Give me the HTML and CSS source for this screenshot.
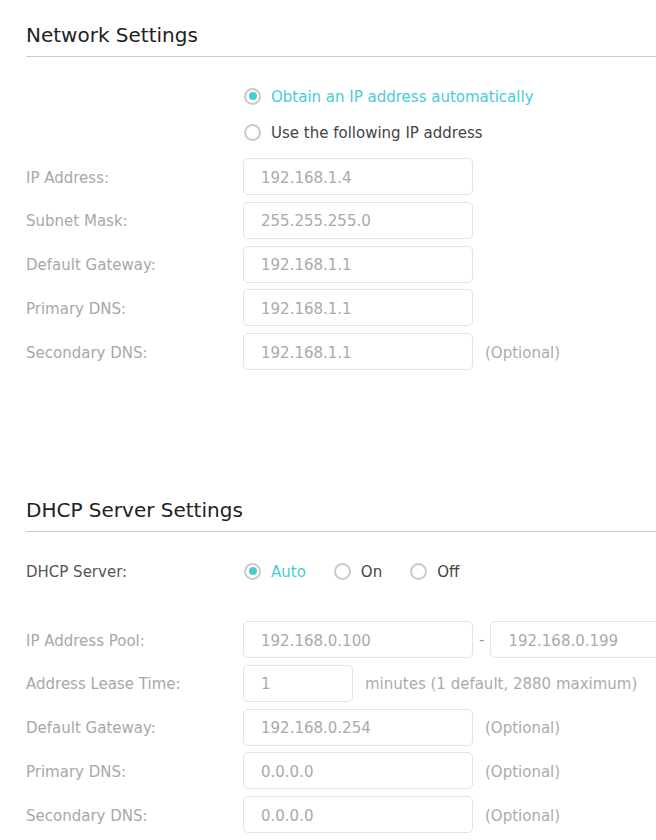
FILE: index.html
```html
<!DOCTYPE html>
<html>
<head>
<meta charset="utf-8">
<link rel="stylesheet" href="styles.css">
</head>
<body>
<div class="page">
  <section class="panel">
    <h2 class="title">Network Settings</h2>
    <div class="form">
      <div class="row radio-row first">
        <div class="label"></div>
        <div class="field"><span class="radio on"></span><span class="opt active">Obtain an IP address automatically</span></div>
      </div>
      <div class="row radio-row">
        <div class="label"></div>
        <div class="field"><span class="radio"></span><span class="opt">Use the following IP address</span></div>
      </div>
      <div class="row input-row top-gap">
        <div class="label">IP Address:</div>
        <div class="field"><div class="input">192.168.1.4</div></div>
      </div>
      <div class="row input-row">
        <div class="label">Subnet Mask:</div>
        <div class="field"><div class="input">255.255.255.0</div></div>
      </div>
      <div class="row input-row">
        <div class="label">Default Gateway:</div>
        <div class="field"><div class="input">192.168.1.1</div></div>
      </div>
      <div class="row input-row">
        <div class="label">Primary DNS:</div>
        <div class="field"><div class="input">192.168.1.1</div></div>
      </div>
      <div class="row input-row">
        <div class="label">Secondary DNS:</div>
        <div class="field"><div class="input">192.168.1.1</div><span class="hint">(Optional)</span></div>
      </div>
    </div>
  </section>

  <section class="panel second">
    <h2 class="title">DHCP Server Settings</h2>
    <div class="form">
      <div class="row radio-row first">
        <div class="label dark">DHCP Server:</div>
        <div class="field">
          <span class="choice"><span class="radio on"></span><span class="opt active">Auto</span></span>
          <span class="choice"><span class="radio"></span><span class="opt">On</span></span>
          <span class="choice"><span class="radio"></span><span class="opt">Off</span></span>
        </div>
      </div>
      <div class="row input-row pool-gap">
        <div class="label">IP Address Pool:</div>
        <div class="field"><div class="input">192.168.0.100</div><span class="dash">-</span><div class="input">192.168.0.199</div></div>
      </div>
      <div class="row input-row">
        <div class="label">Address Lease Time:</div>
        <div class="field"><div class="input short">1</div><span class="hint">minutes (1 default, 2880 maximum)</span></div>
      </div>
      <div class="row input-row">
        <div class="label">Default Gateway:</div>
        <div class="field"><div class="input">192.168.0.254</div><span class="hint">(Optional)</span></div>
      </div>
      <div class="row input-row">
        <div class="label">Primary DNS:</div>
        <div class="field"><div class="input">0.0.0.0</div><span class="hint">(Optional)</span></div>
      </div>
      <div class="row input-row">
        <div class="label">Secondary DNS:</div>
        <div class="field"><div class="input">0.0.0.0</div><span class="hint">(Optional)</span></div>
      </div>
    </div>
  </section>
</div>
</body>
</html>
```
FILE: styles.css
```css
html, body {
  margin: 0;
  padding: 0;
  background: #ffffff;
  overflow: hidden;
}
body {
  font-family: "DejaVu Sans", Verdana, sans-serif;
  font-size: 15px;
  color: #333;
}
.page {
  padding-left: 26px;
  width: 630px;
  overflow: hidden;
}
.panel.second {
  margin-top: 105px;
}
.title {
  margin: 0;
  padding: 23px 0 9px 0;
  font-size: 20px;
  line-height: 24px;
  font-weight: normal;
  color: #222;
  border-bottom: 1px solid #cccccc;
}
.form {
  display: flex;
  flex-direction: column;
}
.row {
  display: grid;
  grid-template-columns: 217px 1fr;
  align-items: center;
}
.radio-row {
  height: 36px;
}
.radio-row.first {
  margin-top: 21px;
}
.input-row {
  height: 37px;
  margin-top: 6.75px;
}
.input-row.top-gap {
  margin-top: 8px;
}
.input-row.pool-gap {
  margin-top: 32px;
}
.label {
  color: #a8a8a8;
  white-space: nowrap;
  padding-top: 2px;
}
.label.dark {
  color: #555;
}
.field {
  display: flex;
  align-items: center;
  white-space: nowrap;
}
.input {
  box-sizing: border-box;
  flex: none;
  width: 230px;
  height: 37px;
  border: 1px solid #e3e3e3;
  border-radius: 5px;
  padding-left: 17px;
  padding-top: 2px;
  display: flex;
  align-items: center;
  color: #aaaaaa;
}
.input.short {
  width: 110px;
}
.hint {
  margin-left: 12px;
  padding-top: 2px;
  color: #ababab;
}
.dash {
  margin: 0 6px 0 6px;
  color: #999;
}
.radio {
  box-sizing: border-box;
  flex: none;
  width: 17px;
  height: 17px;
  border: 2px solid #cbcbcb;
  border-radius: 50%;
  margin-left: 1px;
  position: relative;
}
.radio.on::after {
  content: "";
  position: absolute;
  left: 2.5px;
  top: 2.5px;
  width: 8px;
  height: 8px;
  border-radius: 50%;
  background: #4acbd6;
}
.opt {
  margin-left: 10px;
  padding-top: 1px;
  color: #444;
}
.opt.active {
  color: #4acbd6;
}
.choice {
  display: flex;
  align-items: center;
  margin-right: 28px;
}
.choice + .choice .radio {
  margin-left: 0;
}
```
